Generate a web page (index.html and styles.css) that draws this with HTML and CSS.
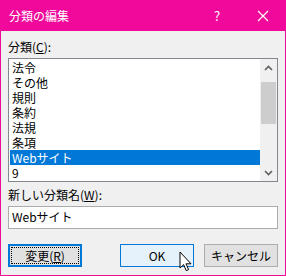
FILE: index.html
```html
<!DOCTYPE html>
<html><head><meta charset="utf-8"><link rel="stylesheet" href="styles.css"></head>
<body>
<div class="win">
  <div class="title">
    <span class="ttext">分類の編集</span>
    <span class="help">?</span>
    <span class="close"><svg width="12" height="12" viewBox="0 0 12 12"><path d="M1 1L11 11M11 1L1 11" stroke="#fff" stroke-width="1.2"/></svg></span>
  </div>
  <div class="content">
    <div class="label">分類(<u>C</u>):</div>
    <div class="list">
      <div class="items">
        <div class="item">法令</div>
        <div class="item">その他</div>
        <div class="item">規則</div>
        <div class="item">条約</div>
        <div class="item">法規</div>
        <div class="item">条項</div>
        <div class="item sel">Webサイト</div>
        <div class="item">9</div>
      </div>
      <div class="sb">
        <div class="arr"><svg width="9" height="6" viewBox="0 0 9 6"><path d="M1 5L4.5 1.5L8 5" stroke="#606060" stroke-width="1.6" fill="none"/></svg></div>
        <div class="track"><div class="thumb"></div></div>
        <div class="arr"><svg width="9" height="6" viewBox="0 0 9 6"><path d="M1 1L4.5 4.5L8 1" stroke="#606060" stroke-width="1.6" fill="none"/></svg></div>
      </div>
    </div>
    <div class="label l2">新しい分類名(<u>W</u>):</div>
    <div class="input">Webサイト</div>
    <div class="buttons">
      <div class="btn def"><span class="focus">変更(<u>R</u>)</span></div>
      <div class="spacer"></div>
      <div class="btn hov">OK</div>
      <div class="btn">キャンセル</div>
    </div>
  </div>
  <svg class="cursor" width="14" height="22" viewBox="0 0 14 22"><path d="M1 1V17L4.6 13.6L7.2 19.6L9.6 18.6L7 12.8H12Z" fill="#fff" stroke="#000" stroke-width="1"/></svg>
</div>
</body></html>
```
FILE: styles.css
```css
*{box-sizing:border-box;}
html,body{margin:0;padding:0;}
body{width:286px;height:276px;overflow:hidden;font-family:"Noto Sans CJK JP","Noto Sans",sans-serif;font-size:12px;color:#000;}
.win{position:relative;width:286px;height:276px;background:#f0f0f0;border:1px solid #ec0c98;border-top:none;}
.title{height:31px;background:#f0099b;color:#fff;display:flex;align-items:center;padding-left:9px;margin:0 -1px;}
.ttext{flex:1;font-size:12px;}
.help{width:46px;text-align:center;font-size:13px;margin-right:0;}
.close{width:46px;display:flex;justify-content:center;align-items:center;}
.content{padding:0 7px;}
.label{height:27px;line-height:15px;padding-top:8px;}
.label u{text-decoration:underline;}
.list{height:124px;border:1px solid #828790;background:#fff;display:flex;}
.items{flex:1;padding:1px 0 0 1px;}
.item{height:15px;line-height:15px;padding-left:2px;white-space:nowrap;overflow:hidden;}
.item.sel{background:#0078d7;color:#fff;}
.sb{width:17px;background:#f0f0f0;display:flex;flex-direction:column;}
.arr{height:17px;display:flex;justify-content:center;align-items:center;}
.track{flex:1;padding:6px 1px 0 1px;}
.thumb{height:42px;background:#cdcdcd;}
.l2{height:24px;padding-top:5px;}
.input{height:23px;border:1px solid #acacac;background:#fff;line-height:20px;padding-left:3px;}
.buttons{display:flex;margin-top:15px;gap:10px;}
.spacer{flex:1;}
.btn{width:74px;height:23px;background:#e1e1e1;border:1px solid #adadad;display:flex;align-items:center;justify-content:center;line-height:15px;}
.btn.hov{background:#e5f1fb;border-color:#0078d7;}
.btn.def{border:2px solid #0078d7;padding:1px;}
.focus{width:100%;height:100%;border:1px dotted #000;display:flex;align-items:center;justify-content:center;}
.cursor{position:absolute;left:178px;top:251px;}
```
